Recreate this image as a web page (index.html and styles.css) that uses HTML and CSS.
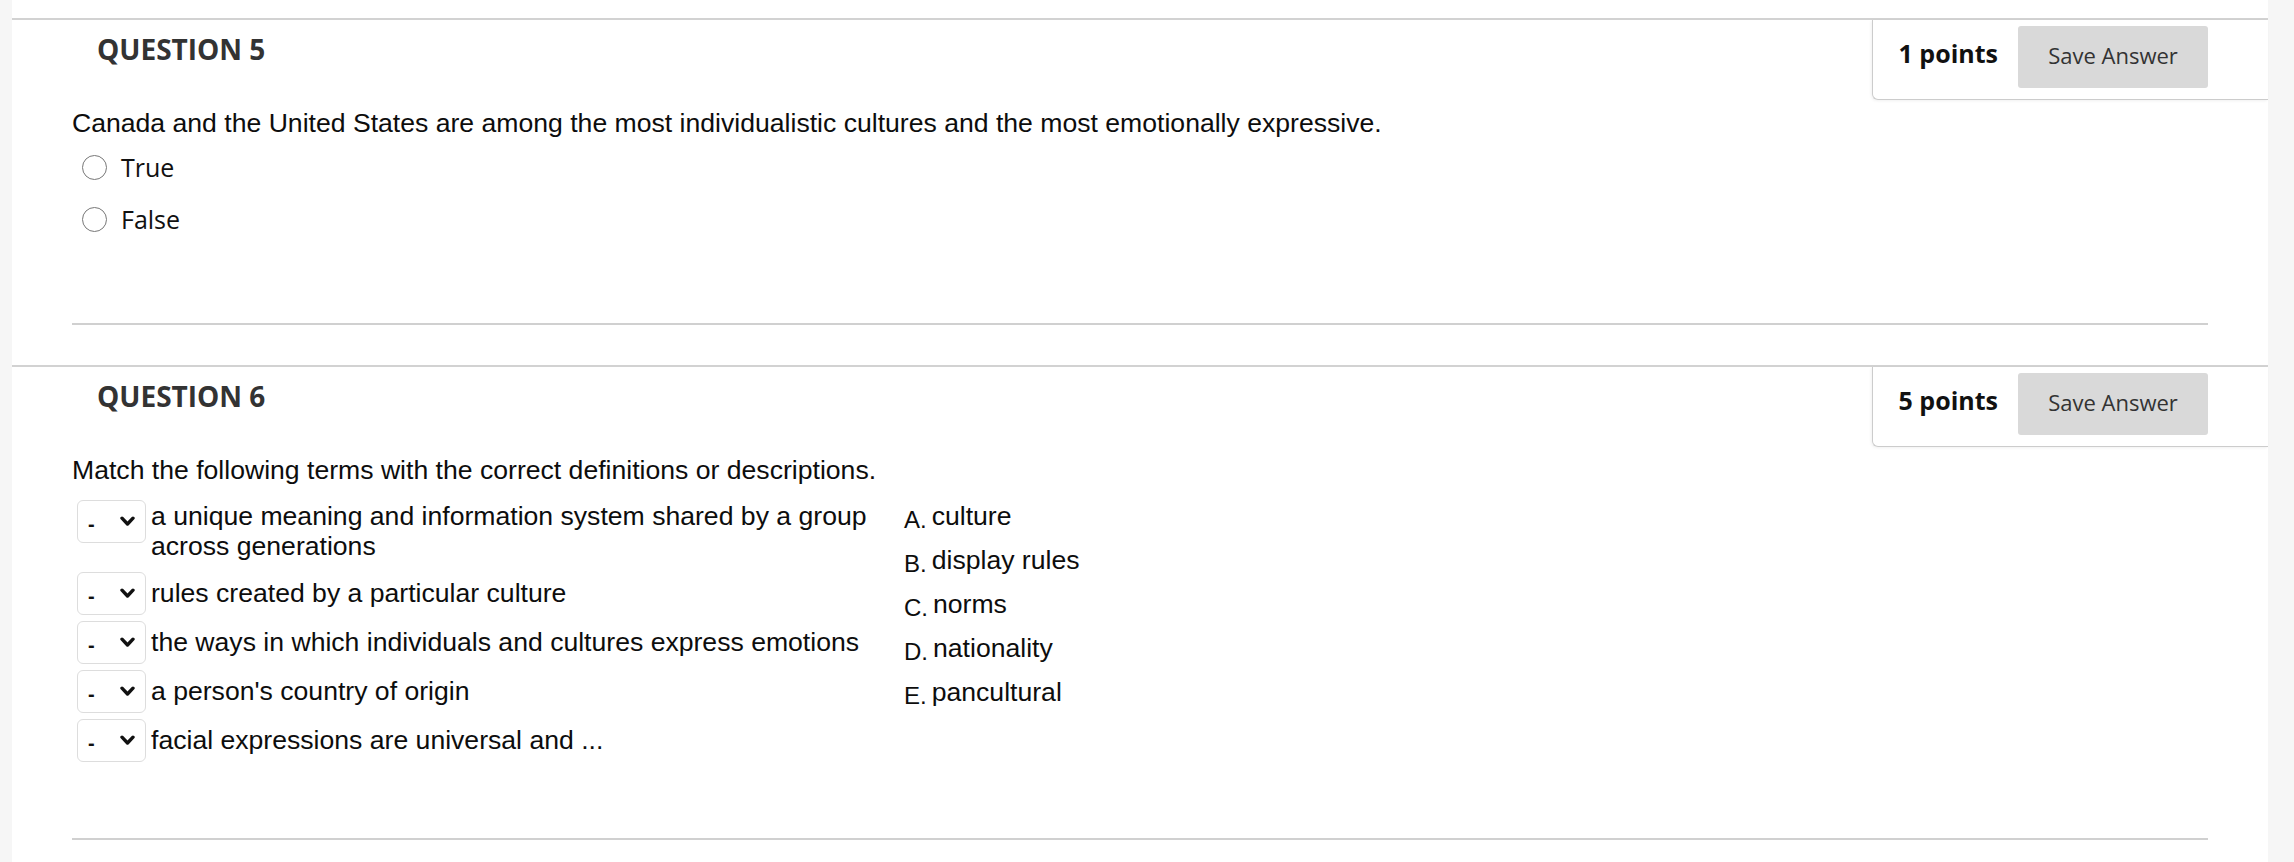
FILE: index.html
```html
<!DOCTYPE html>
<html lang="en">
<head>
<meta charset="utf-8">
<title>Test</title>
<link rel="stylesheet" href="styles.css">
</head>
<body>
<div class="page">
  <section class="question">
    <div class="q-head">
      <h2 class="q-title">QUESTION 5</h2>
      <div class="q-points">
        <span class="pts">1 points</span>
        <button class="save" type="button">Save Answer</button>
      </div>
    </div>
    <div class="q-body q5-body">
      <p class="q-text">Canada and the United States are among the most individualistic cultures and the most emotionally expressive.</p>
      <ul class="options">
        <li class="option"><span class="radio"></span><span class="opt-label">True</span></li>
        <li class="option"><span class="radio"></span><span class="opt-label">False</span></li>
      </ul>
    </div>
  </section>

  <section class="question">
    <div class="q-head">
      <h2 class="q-title">QUESTION 6</h2>
      <div class="q-points">
        <span class="pts">5 points</span>
        <button class="save" type="button">Save Answer</button>
      </div>
    </div>
    <div class="q-body q6-body">
      <p class="q-text">Match the following terms with the correct definitions or descriptions.</p>
      <div class="match">
        <div class="terms">
          <div class="term-row term-row-wrap">
            <div class="sel"><span class="dash">-</span><svg class="chev" width="15" height="11" viewBox="0 0 15 11"><path d="M2 2.2 L7.5 8 L13 2.2" fill="none" stroke="#111" stroke-width="3.4" stroke-linecap="round" stroke-linejoin="round"/></svg></div>
            <div class="term-text">a unique meaning and information system shared by a group across generations</div>
          </div>
          <div class="term-row">
            <div class="sel"><span class="dash">-</span><svg class="chev" width="15" height="11" viewBox="0 0 15 11"><path d="M2 2.2 L7.5 8 L13 2.2" fill="none" stroke="#111" stroke-width="3.4" stroke-linecap="round" stroke-linejoin="round"/></svg></div>
            <div class="term-text">rules created by a particular culture</div>
          </div>
          <div class="term-row">
            <div class="sel"><span class="dash">-</span><svg class="chev" width="15" height="11" viewBox="0 0 15 11"><path d="M2 2.2 L7.5 8 L13 2.2" fill="none" stroke="#111" stroke-width="3.4" stroke-linecap="round" stroke-linejoin="round"/></svg></div>
            <div class="term-text">the ways in which individuals and cultures express emotions</div>
          </div>
          <div class="term-row">
            <div class="sel"><span class="dash">-</span><svg class="chev" width="15" height="11" viewBox="0 0 15 11"><path d="M2 2.2 L7.5 8 L13 2.2" fill="none" stroke="#111" stroke-width="3.4" stroke-linecap="round" stroke-linejoin="round"/></svg></div>
            <div class="term-text">a person's country of origin</div>
          </div>
          <div class="term-row">
            <div class="sel"><span class="dash">-</span><svg class="chev" width="15" height="11" viewBox="0 0 15 11"><path d="M2 2.2 L7.5 8 L13 2.2" fill="none" stroke="#111" stroke-width="3.4" stroke-linecap="round" stroke-linejoin="round"/></svg></div>
            <div class="term-text">facial expressions are universal and ...</div>
          </div>
        </div>
        <ul class="answers">
          <li class="answer"><span class="ans-letter">A.</span><span>culture</span></li>
          <li class="answer"><span class="ans-letter">B.</span><span>display rules</span></li>
          <li class="answer"><span class="ans-letter">C.</span><span>norms</span></li>
          <li class="answer"><span class="ans-letter">D.</span><span>nationality</span></li>
          <li class="answer"><span class="ans-letter">E.</span><span>pancultural</span></li>
        </ul>
      </div>
    </div>
  </section>
</div>
</body>
</html>
```
FILE: styles.css
```css
* { box-sizing: border-box; }

html, body {
  margin: 0;
  padding: 0;
  background: #f6f6f6;
}

.page {
  margin: 0 26px 0 12px;
  background: #ffffff;
  padding-top: 18px;
  min-height: 862px;
}

.question {
  border-top: 2px solid #d2d2d2;
}

.question + .question {
  margin-top: 40px;
}

.q-head {
  display: flex;
  justify-content: space-between;
  align-items: flex-start;
}

.q-title {
  margin: 0;
  padding: 11px 0 0 85px;
  font-family: "Open Sans", sans-serif;
  font-weight: 700;
  font-size: 28px;
  line-height: 36px;
  color: #333333;
}

.q-points {
  display: flex;
  align-items: center;
  height: 80px;
  padding: 6px 60px 11px 26px;
  border-left: 1px solid #cccccc;
  border-bottom: 1px solid #cccccc;
  border-bottom-left-radius: 6px;
  box-shadow: -1px 1px 3px rgba(0, 0, 0, 0.06);
}

.pts {
  font-family: "Open Sans", sans-serif;
  font-weight: 700;
  font-size: 25px;
  color: #111111;
  margin-right: 20px;
  padding-bottom: 8px;
  white-space: nowrap;
}

.save {
  width: 190px;
  height: 62px;
  background: #d9d9d9;
  border: 0;
  border-radius: 3px;
  font-family: "Open Sans", sans-serif;
  font-weight: 400;
  font-size: 22px;
  color: #333333;
  padding: 0 0 4px 0;
}

.q-body {
  margin: 0 60px;
  padding-top: 8px;
  border-bottom: 2px solid #d0d0d0;
}

.q5-body { padding-bottom: 85px; }
.q6-body { padding-bottom: 76px; }

.q-text {
  margin: 0;
  font-family: "Liberation Sans", Arial, sans-serif;
  font-size: 26.6px;
  line-height: 30px;
  color: #0d0d0d;
}

.options {
  list-style: none;
  margin: 10px 0 0 0;
  padding: 0 0 0 10px;
  display: flex;
  flex-direction: column;
  gap: 14px;
}

.option {
  display: flex;
  align-items: center;
  height: 38px;
}

.radio {
  width: 25px;
  height: 25px;
  border: 1.6px solid #777777;
  border-radius: 50%;
  margin-right: 14px;
  flex: none;
}

.opt-label {
  font-family: "Open Sans", sans-serif;
  font-size: 25px;
  color: #111111;
}

.match {
  display: flex;
  align-items: flex-start;
  margin-top: 15px;
  padding-left: 5px;
}

.terms {
  width: 813px;
  display: flex;
  flex-direction: column;
  gap: 6px;
}

.term-row {
  display: flex;
  align-items: flex-start;
}

.sel {
  width: 69px;
  height: 43px;
  flex: none;
  border: 1.5px solid #dddddd;
  border-radius: 6px;
  display: flex;
  align-items: center;
  justify-content: space-between;
  padding: 0 10px 0 10px;
  background: #ffffff;
}

.dash {
  font-family: "Liberation Sans", Arial, sans-serif;
  font-weight: 700;
  font-size: 20px;
  color: #111111;
  line-height: 1;
  padding-top: 5px;
}

.chev { display: block; }

.term-text {
  margin-left: 5px;
  width: 740px;
  padding-top: 6px;
  font-family: "Liberation Sans", Arial, sans-serif;
  font-size: 26.6px;
  line-height: 30px;
  color: #0d0d0d;
}

.term-row-wrap .term-text {
  padding-top: 1px;
  padding-bottom: 5px;
}

.answers {
  list-style: none;
  margin: 1px 0 0 14px;
  padding: 0;
  display: flex;
  flex-direction: column;
  gap: 14px;
}

.answer {
  display: flex;
  align-items: baseline;
  font-family: "Liberation Sans", Arial, sans-serif;
  font-size: 26.6px;
  line-height: 30px;
  color: #0d0d0d;
}

.ans-letter {
  font-size: 24px;
  line-height: 24px;
  margin-right: 5px;
  position: relative;
  top: 3px;
}
```
